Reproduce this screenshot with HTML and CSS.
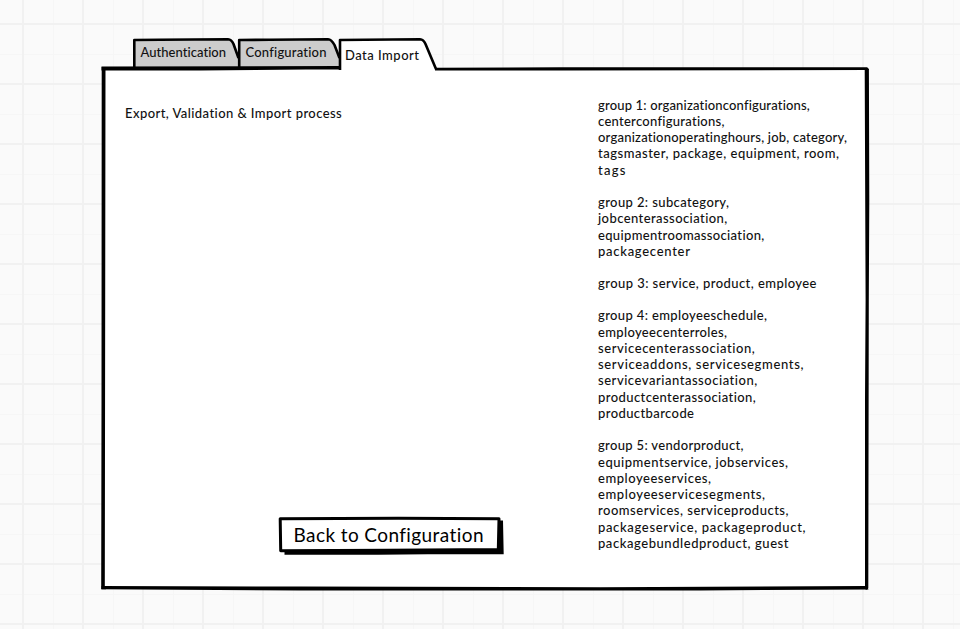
FILE: index.html
```html
<!DOCTYPE html>
<html lang="en">
<head>
<meta charset="utf-8">
<title>Data Import</title>
<link rel="stylesheet" href="styles.css">
</head>
<body>
<main class="mockup">
  <svg class="frame" viewBox="0 0 960 629" aria-hidden="true">
    <path class="sheet" d="M103 69H867V588H103Z"/>
    <path class="tab-idle" d="M134 68V40.500L160 40L226 39.500Q231 39 233 44L238 57V68Z"/>
    <path class="tab-idle" d="M239.500 68V40.500L270 40L326 39.500Q331 39 334 45L339 57V68Z"/>
    <path class="tab-open" d="M340.500 70V40.500L365 40L418 39.500Q423 39 425 43L436 69V71H342Z"/>
    <path class="line" d="M134.300 67V40L160 39.700L228 39.300Q231.500 39.500 233.500 44L238.500 58"/>
    <path class="line" d="M239.200 67V40L270 39.700L328 39.300Q331.500 39.500 334.500 45L339.500 58"/>
    <path class="line" d="M340 70V40L365 39.700L420 39.300Q423.500 39.500 425.500 44L436 69"/>
    <path d="M101.500 66.500L339 66L341 69.500L306 69.500L200 70.500L101.500 70.500Z"/>
    <path d="M435 67.700L560 67.200L867 67.300Q869 68 868.800 70L560 70.400L435 70.400Z"/>
    <path d="M101.700 67H105.500L105.200 300L104.800 586L106 589.200L101.200 589.300L101.500 400Z"/>
    <path d="M864.700 69H868.900L869.300 200L868.800 300L868.300 588Q867 591 865 589L865 400L865.600 300Z"/>
    <path d="M101.500 586L300 586.500L600 587.200L867 586L868.500 589.500L700 590.400L300 590.400L101.500 589.300Z"/>
  </svg>

  <nav class="tabs">
    <span class="tab"><span class="fit" data-width="86">Authentication</span></span>
    <span class="tab"><span class="fit" data-width="81">Configuration</span></span>
    <span class="tab active"><span class="fit" data-width="74">Data Import</span></span>
  </nav>

  <section class="content">
    <div class="process">
      <p class="heading"><span class="fit" data-width="217">Export, Validation &amp; Import process</span></p>
      <button class="back" type="button">
        <svg class="back-frame" viewBox="0 0 226 40" aria-hidden="true">
          <path d="M6.500 6L225 5.500L225.700 39.300L150 39.200L100 39.800L6.500 39.800Z"/>
          <path class="button-face" d="M2.200 3.700L120 3.300L221 3.700L220.300 34.500L110 35.200L2.700 35.700Z"/>
        </svg>
        <span class="fit" data-width="190">Back to Configuration</span>
      </button>
    </div>
    <div class="groups">
      <p>
        <span class="fit" data-width="212">group 1: organizationconfigurations,</span><br>
        <span class="fit" data-width="126.500">centerconfigurations,</span><br>
        <span class="fit" data-width="249.500">organizationoperatinghours, job, category,</span><br>
        <span class="fit" data-width="241">tagsmaster, package, equipment, room,</span><br>
        <span class="fit" data-width="27.500">tags</span>
      </p>
      <p>
        <span class="fit" data-width="131">group 2: subcategory,</span><br>
        <span class="fit" data-width="129.500">jobcenterassociation,</span><br>
        <span class="fit" data-width="166.500">equipmentroomassociation,</span><br>
        <span class="fit" data-width="92">packagecenter</span>
      </p>
      <p><span class="fit" data-width="218.500">group 3: service, product, employee</span></p>
      <p>
        <span class="fit" data-width="169">group 4: employeeschedule,</span><br>
        <span class="fit" data-width="129">employeecenterroles,</span><br>
        <span class="fit" data-width="157">servicecenterassociation,</span><br>
        <span class="fit" data-width="205.500">serviceaddons, servicesegments,</span><br>
        <span class="fit" data-width="159.500">servicevariantassociation,</span><br>
        <span class="fit" data-width="158">productcenterassociation,</span><br>
        <span class="fit" data-width="96">productbarcode</span>
      </p>
      <p>
        <span class="fit" data-width="145.500">group 5: vendorproduct,</span><br>
        <span class="fit" data-width="190">equipmentservice, jobservices,</span><br>
        <span class="fit" data-width="113">employeeservices,</span><br>
        <span class="fit" data-width="167">employeeservicesegments,</span><br>
        <span class="fit" data-width="190.500">roomservices, serviceproducts,</span><br>
        <span class="fit" data-width="207.500">packageservice, packageproduct,</span><br>
        <span class="fit" data-width="190.500">packagebundledproduct, guest</span>
      </p>
    </div>
  </section>
</main>
<script src="fit.js"></script>
</body>
</html>
```

FILE: styles.css
```css
* { box-sizing: border-box; }

body {
  margin: 0;
  font-family: Lato, "Open Sans", sans-serif;
  font-size: 13px;
  font-weight: 500;
  color: #111;
  background-color: #fafafa;
  background-image:
    linear-gradient(90deg, #f1f1f1 2px, transparent 2px),
    linear-gradient(#f1f1f1 2px, transparent 2px),
    linear-gradient(90deg, #f6f6f6 1px, transparent 1px),
    linear-gradient(#f6f6f6 1px, transparent 1px);
  background-size: 60px 60px;
  background-position: 22px 0, 0 23px, 53px 0, 0 54px;
}

.mockup {
  position: relative;
  width: 960px;
  height: 629px;
  padding: 38px 92px 38px 102px;
  overflow: hidden;
}

.frame {
  position: absolute;
  inset: 0;
  width: 960px;
  height: 629px;
}

.sheet, .tab-open { fill: #fff; }
.tab-idle { fill: #ccc; }
.line {
  fill: none;
  stroke: #000;
  stroke-width: 2.6;
  stroke-linejoin: round;
}

.fit {
  display: inline-block;
  white-space: nowrap;
}

.tabs {
  position: relative;
  display: flex;
  height: 31px;
  padding-left: 31px;
}

.tab {
  width: 105px;
  padding: 4px 0 0 7.500px;
  line-height: 20px;
}

.tab + .tab { width: 100px; }
.tab + .tab.active { padding: 7px 0 0 7px; }

.content {
  position: relative;
  display: flex;
  height: 520px;
  padding: 27.600px 0 34px 23px;
}

.process {
  display: flex;
  flex-direction: column;
  justify-content: space-between;
  width: 473px;
}

.heading {
  margin: 0;
  padding-top: 7.500px;
  line-height: 18px;
}

.back {
  position: relative;
  width: 226px;
  height: 40px;
  margin-left: 152.500px;
  padding: 0 0 2px 16px;
  border: 0;
  background: none;
  color: #000;
  font: inherit;
  font-size: 19px;
  font-weight: 400;
  text-align: left;
}

.back-frame {
  position: absolute;
  inset: 0;
  width: 226px;
  height: 40px;
}

.button-face {
  fill: #fff;
  stroke: #000;
  stroke-width: 3;
  stroke-linejoin: round;
}

.back .fit { position: relative; }

.groups { line-height: 16.300px; }
.groups p { margin: 0 0 15.900px; }
.groups .fit { vertical-align: top; }
```

FILE: fit.js
```js
// Tracks each line so that it fills its declared measure.
document.querySelectorAll(".fit").forEach(function (line) {
  var target = parseFloat(line.dataset.width);
  var natural = line.getBoundingClientRect().width;
  var gaps = line.textContent.length - 1;
  line.style.letterSpacing = (target - natural) / gaps + "px";
});
```
